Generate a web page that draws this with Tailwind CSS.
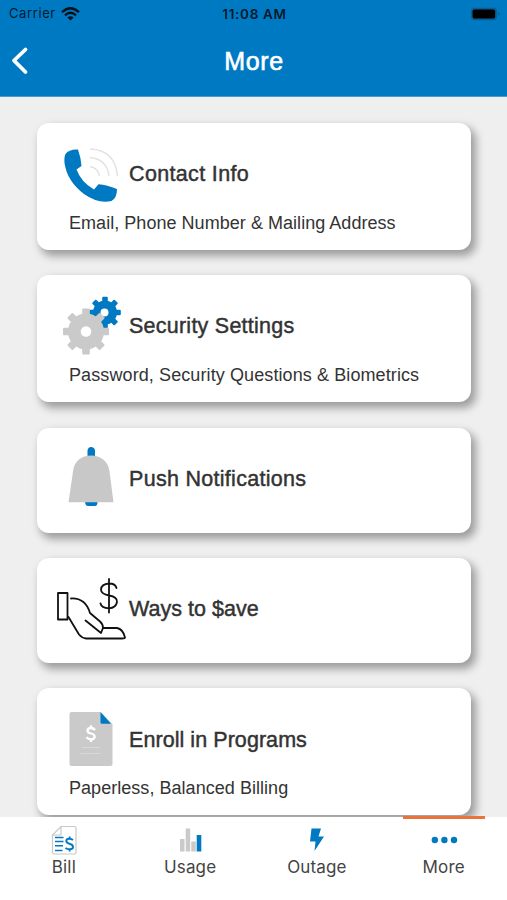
<!DOCTYPE html>
<html lang="en">
<head>
    <meta charset="UTF-8">
    <meta name="viewport" content="width=device-width, initial-scale=1.0">
    <title>More</title>
    <script src="https://cdn.jsdelivr.net/npm/@tailwindcss/browser@4"></script>
</head>

<body class="bg-[#efefef] h-[900px] overflow-hidden flex flex-col text-[#333] font-['Liberation_Sans',sans-serif]">

    <!-- Header -->
    <header class="bg-[#0079c3] h-[97px] shrink-0 border-b border-[#4b9acb]">
        <div class="grid grid-cols-3 items-center h-7 pl-[9px] pr-[7px] text-black/80 font-[Inter,sans-serif] text-[13px]">
            <div class="flex items-center gap-[5px]">
                <span class="tracking-[0.6px]">Carrier</span>
                <svg class="w-[19px] h-[14px]" viewBox="0 0 19 14" fill="none" stroke="#06111a" stroke-width="2.3">
                    <path d="M1 5.2Q9.500 -2.600 18 5.200M4 8.300Q9.500 3.300 15 8.300"/>
                    <path d="M9.500 13.600L6.400 10.500Q9.500 7.800 12.600 10.500Z" fill="#06111a" stroke="none"/>
                </svg>
            </div>
            <span class="text-center font-semibold text-[13.500px] tracking-[0.7px] whitespace-nowrap">11:08 AM</span>
            <svg class="justify-self-end w-[30px] h-[14px]" viewBox="0 0 30 14">
                <rect x="1" y=".7" width="26" height="12.600" rx="3.500" fill="#0b5c92"/>
                <rect x="2.600" y="2.500" width="22.500" height="9" rx="1.800" fill="#000"/>
                <path d="M28 5v4q1.500-.5 1.500-2T28 5z" fill="#0b5c92"/>
            </svg>
        </div>
        <div class="grid grid-cols-[40px_1fr_40px] items-center h-[66px] text-white">
            <svg class="w-10 h-8" viewBox="0 0 40 32" fill="none" stroke="#fff" stroke-width="3.800" stroke-linecap="round" stroke-linejoin="round">
                <path d="M25.500 4.500L14 15.500L25.500 27"/>
            </svg>
            <h1 class="text-center pt-0.5 pl-px text-[25px] [-webkit-text-stroke:0.6px] tracking-[0.6px]">More</h1>
        </div>
    </header>

    <!-- Menu -->
    <main class="flex-1 min-h-0 overflow-hidden pt-[26px] pl-[37px] pr-9 flex flex-col">

        <a class="shrink-0 h-[127px] mb-[25px] bg-white rounded-xl shadow-[4px_5px_9px_1px_rgba(0,0,0,0.35)] pl-5 pt-[15px]">
            <div class="flex items-center">
                <svg class="w-[72px] h-[72px]" viewBox="57 138 72 72">
                    <path d="M65.500 154Q69 149 78 149.500Q81 158 81.500 166L76.500 169.500Q81 182 94 189.500L98.500 184.300Q107 185 117 189Q117 198 111.500 201Q98 204 84 194Q67 181 64.500 163Q64 157 65.500 154Z" fill="#0079c3"/>
                    <path d="M90 149Q115 150 117.500 176M90 157.500Q107 159 109 176M90 166.500Q98 168 99.500 176" fill="none" stroke="#e2e2e2" stroke-width="1.400"/>
                </svg>
                <h2 class="text-[21.500px] [-webkit-text-stroke:0.45px] tracking-[0.35px]">Contact Info</h2>
            </div>
            <p class="pl-3 mt-px leading-6 text-[18px] tracking-[0.04px]">Email, Phone Number &amp; Mailing Address</p>
        </a>

        <a class="shrink-0 h-[127px] mb-[26px] bg-white rounded-xl shadow-[4px_5px_9px_1px_rgba(0,0,0,0.35)] pl-5 pt-[15px]">
            <div class="flex items-center">
                <svg class="w-[72px] h-[72px]" viewBox="57 290 72 72">
                    <g fill="#0079c3" transform="translate(105 312.500)">
                        <circle r="12"/>
                        <g id="teeth-small">
                            <rect x="-2.800" y="-15.800" width="5.600" height="31.600" rx="1"/>
                            <rect x="-15.800" y="-2.800" width="31.600" height="5.600" rx="1"/>
                        </g>
                        <use href="#teeth-small" transform="rotate(45)"/>
                    </g>
                    <circle cx="104.500" cy="312.500" r="4" fill="#fff"/>
                    <g fill="#cacaca" transform="translate(86 331.500)">
                        <circle r="18"/>
                        <g id="teeth-big">
                            <rect x="-3.800" y="-23" width="7.600" height="46" rx="1"/>
                            <rect x="-23" y="-3.800" width="46" height="7.600" rx="1"/>
                        </g>
                        <use href="#teeth-big" transform="rotate(45)"/>
                    </g>
                    <circle cx="86" cy="331.500" r="5.300" fill="#fff"/>
                </svg>
                <h2 class="text-[21.500px] [-webkit-text-stroke:0.45px] tracking-[0.24px]">Security Settings</h2>
            </div>
            <p class="pl-3 mt-px leading-6 text-[18px] tracking-[0.1px]">Password, Security Questions &amp; Biometrics</p>
        </a>

        <a class="shrink-0 h-[105px] mb-[25px] bg-white rounded-xl shadow-[4px_5px_9px_1px_rgba(0,0,0,0.35)] pl-5 pt-[15px]">
            <div class="flex items-center">
                <svg class="w-[72px] h-[72px]" viewBox="57 443 72 72">
                    <path d="M87.500 457V450.500Q88 447 91 447Q94.500 447 95 450.500V457ZM85 502H97.500Q97.500 506 95 506H88Q85.500 506 85 502Z" fill="#0079c3"/>
                    <path d="M68.500 502.300L73 471.500C74 461 82 455.500 91 455.500C100 455.500 108.500 461 109.500 471.500L113.500 502.300Z" fill="#c8c8c8"/>
                </svg>
                <h2 class="text-[21.500px] [-webkit-text-stroke:0.45px] tracking-[0.29px]">Push Notifications</h2>
            </div>
        </a>

        <a class="shrink-0 h-[105px] mb-[25px] bg-white rounded-xl shadow-[4px_5px_9px_1px_rgba(0,0,0,0.35)] pl-5 pt-[15px]">
            <div class="flex items-center">
                <svg class="w-[72px] h-[72px]" viewBox="57 573 72 72" fill="none" stroke="#111" stroke-width="1.800" stroke-linecap="round" stroke-linejoin="round">
                    <path d="M58 593H67.500V619.500H58Z"/>
                    <path d="M71 598.500C81 598 87 603 90 613L100 621.500Q103 624 103 628L101 633L85.500 620.500M103 628H117Q123 629 125 637.500Q125 638.500 122 638.500H86Q82 638 79 634.500L68.500 617"/>
                    <path d="M109 579V612.500M116.500 588Q115.500 583.500 109 583.500Q101.500 584 101 589.500Q101 594 109 595.500Q117.500 597 117 602Q116 608 109 608.300Q101.500 608 100.500 603.500"/>
                </svg>
                <h2 class="text-[21.500px] [-webkit-text-stroke:0.45px] tracking-[0.02px]">Ways to $ave</h2>
            </div>
        </a>

        <a class="shrink-0 h-[127px] bg-white rounded-xl shadow-[4px_5px_9px_1px_rgba(0,0,0,0.35)] pl-5 pt-[15px]">
            <div class="flex items-center">
                <svg class="w-[72px] h-[72px]" viewBox="57 703 72 72">
                    <path d="M71.500 712H100.500L112.500 724V764Q112.500 766 110.500 766H71.500Q69.500 766 69.500 764V714Q69.500 712 71.500 712Z" fill="#cacaca"/>
                    <path d="M100.500 712L111 723.800H102Q100.500 723.800 100.500 722.500Z" fill="#0079c3"/>
                    <path d="M95 730Q93.500 728 91 728Q87.500 728 87.500 730.700Q87.500 732.700 91 733.500Q94.700 734.400 94.700 736.700Q94.500 739.300 91 739.300Q88 739.300 86.500 737.200M91 725.300V728M91 739V742" fill="none" stroke="#fff" stroke-width="2.300"/>
                    <path d="M82 747.500H100.500M80.500 753.500H100.500" stroke="#d8d8d8" stroke-width="1.200"/>
                </svg>
                <h2 class="pt-0.5 text-[21.500px] [-webkit-text-stroke:0.45px] tracking-[0.06px]">Enroll in Programs</h2>
            </div>
            <p class="pl-3 mt-px leading-6 text-[18px] tracking-[0.04px]">Paperless, Balanced Billing</p>
        </a>
    </main>

    <!-- Tab bar -->
    <nav class="shrink-0 h-[83px] bg-white grid grid-cols-4 font-[Inter,sans-serif] text-[17px] leading-6 tracking-[0.15px] text-center text-[#444]">
        <a class="flex flex-col items-center pt-2">
            <svg class="w-8 h-[30px]" viewBox="47 825 32 30" fill="none">
                <path d="M61 826.500H74.500Q76 826.500 76 828V852.500Q76 854 74.500 854H54Q52.500 854 52.500 852.500V835ZM61 826.500V835H52.500" stroke="#c8c8c8" stroke-width="1.200"/>
                <path d="M55 837.500H63.500M55 841.500H63.500M55 845.800H63M55 850.500H62.500" stroke="#0079c3" stroke-width="1.500"/>
                <path d="M73 840Q71.500 838.700 69.500 838.700Q66.300 838.700 66.300 841Q66.300 843 69.500 843.700Q73 844.500 73 847Q73 849.300 69.500 849.300Q67 849.300 65.500 847.800M69.600 836.500V838.700M69.600 849V851.500" stroke="#0079c3" stroke-width="1.900"/>
            </svg>
            <span class="pl-px">Bill</span>
        </a>
        <a class="flex flex-col items-center pt-2">
            <svg class="w-8 h-[30px]" viewBox="174 825 32 30">
                <path d="M180 839H184.500V851.500H180ZM185.700 828.500H190.200V851.500H185.700ZM191.300 841.500H195.800V851.500H191.300Z" fill="#cacaca"/>
                <path d="M196.700 835H201.300V851.500H196.700Z" fill="#0079c3"/>
            </svg>
            <span>Usage</span>
        </a>
        <a class="flex flex-col items-center pt-2">
            <svg class="w-8 h-[30px]" viewBox="301 825 32 30">
                <path d="M311.500 828.500H321L318.500 836.500H324L314.500 851L315.500 841.500H310Z" fill="#0079c3"/>
            </svg>
            <span>Outage</span>
        </a>
        <a class="flex flex-col items-center">
            <span class="w-[82px] h-[3px] -mt-px bg-[#e9733a]"></span>
            <svg class="w-8 h-[30px] mt-1.5" viewBox="427 825 32 30" fill="#0079c3">
                <circle cx="433.800" cy="840" r="3.200"/>
                <circle cx="443.400" cy="840" r="3.200"/>
                <circle cx="453" cy="840" r="3.200"/>
            </svg>
            <span>More</span>
        </a>
    </nav>

</body>
</html>
